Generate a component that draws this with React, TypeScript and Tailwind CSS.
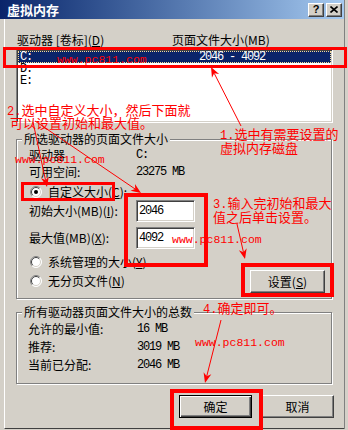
import React from "react";

const RED = "#ff0000";

function Mono({ children, className = "" }: { children: React.ReactNode; className?: string }) {
  return (
    <span className={"font-['Liberation_Mono',monospace] text-[12px] tracking-[-1.2px] " + className}>
      {children}
    </span>
  );
}

function CaptionButton({ children }: { children: React.ReactNode }) {
  return (
    <div className="flex h-[14px] w-[16px] items-center justify-center border border-t-white border-l-white border-r-[#404040] border-b-[#404040] bg-[#d4d0c8] shadow-[inset_-1px_-1px_0_#808080]">
      {children}
    </div>
  );
}

function TitleBar() {
  return (
    <div className="flex h-[19px] shrink-0 items-center bg-linear-to-r from-[#0a246a] to-[#a6caf0] pl-[7px] pr-[2px]">
      <span className="text-[13px] font-bold leading-[13px] text-white">虚拟内存</span>
      <div className="ml-auto flex gap-[2px]">
        <CaptionButton>
          <span className="font-['Liberation_Sans',sans-serif] text-[11px] font-bold leading-[11px]">?</span>
        </CaptionButton>
        <CaptionButton>
          <svg width="8" height="7" viewBox="0 0 8 7">
            <path d="M0.5 0.5 L7.5 6.5 M7.5 0.5 L0.5 6.5" stroke="#000" strokeWidth="1.6" />
          </svg>
        </CaptionButton>
      </div>
    </div>
  );
}

function RadioDot({ checked }: { checked?: boolean }) {
  return (
    <svg width="12" height="12" viewBox="0 0 12 12" className="shrink-0">
      <circle cx="6" cy="6" r="5.5" fill="#fff" />
      <path d="M2.11 9.89 A5.5 5.5 0 0 1 9.89 2.11" stroke="#808080" fill="none" />
      <path d="M9.89 2.11 A5.5 5.5 0 0 1 2.11 9.89" stroke="#fff" fill="none" />
      <path d="M2.8 9.2 A4.5 4.5 0 0 1 9.2 2.8" stroke="#404040" fill="none" />
      <path d="M9.2 2.8 A4.5 4.5 0 0 1 2.8 9.2" stroke="#d4d0c8" fill="none" />
      {checked && <circle cx="6" cy="6" r="2" fill="#000" />}
    </svg>
  );
}

function Radio({ checked, children, className = "" }: { checked?: boolean; children: React.ReactNode; className?: string }) {
  return (
    <div className={"flex h-[16px] items-center gap-[6px] pl-[13px] " + className}>
      <RadioDot checked={checked} />
      <span>{children}</span>
    </div>
  );
}

function TextBox({ value }: { value: string }) {
  return (
    <div className="flex h-[22px] w-[59px] items-center border border-t-[#808080] border-l-[#808080] border-b-white border-r-white bg-white pl-[2px] shadow-[inset_1px_1px_0_#404040,inset_-1px_-1px_0_#d4d0c8]">
      <Mono>{value}</Mono>
    </div>
  );
}

function Button({ children, isDefault, className = "" }: { children: React.ReactNode; isDefault?: boolean; className?: string }) {
  const look = isDefault
    ? "border border-black shadow-[inset_1px_1px_0_#fff,inset_-1px_-1px_0_#404040,inset_-2px_-2px_0_#808080]"
    : "border border-t-white border-l-white border-r-[#404040] border-b-[#404040] shadow-[inset_-1px_-1px_0_#808080]";
  return (
    <div className={"flex h-[23px] items-center justify-center bg-[#d4d0c8] " + look + " " + className}>
      {children}
    </div>
  );
}

function GroupLabel({ children }: { children: React.ReactNode }) {
  return <span className="-mt-[7px] ml-[5px] h-[12px] self-start bg-[#d4d0c8] px-[2px]">{children}</span>;
}

function Arrow({ x1, y1, x2, y2 }: { x1: number; y1: number; x2: number; y2: number }) {
  const dx = x2 - x1;
  const dy = y2 - y1;
  const len = Math.hypot(dx, dy);
  const ux = dx / len;
  const uy = dy / len;
  const hl = 10;
  const hw = 4;
  const bx = x2 - ux * hl;
  const by = y2 - uy * hl;
  const nx = x2 - ux * (hl - 3);
  const ny = y2 - uy * (hl - 3);
  const pts = `${x2},${y2} ${bx - uy * hw},${by + ux * hw} ${nx},${ny} ${bx + uy * hw},${by - ux * hw}`;
  return (
    <g>
      <line x1={x1} y1={y1} x2={nx} y2={ny} stroke={RED} strokeWidth="1" />
      <polygon points={pts} fill={RED} />
    </g>
  );
}

function Annotations() {
  const box = "absolute border-[#ff0000]";
  const note = "absolute whitespace-nowrap text-[13px] leading-[14px] text-[#ff0000]";
  const site = "absolute whitespace-nowrap font-['Liberation_Mono',monospace] text-[11.5px] leading-[12px] text-[#ff0000]";
  return (
    <div className="pointer-events-none absolute inset-0">
      <div className={box + " left-[3px] top-[47px] h-[21px] w-[344px] border-[3px]"} />
      <div className={box + " left-[21px] top-[182px] h-[19px] w-[94px] border-[3px]"} />
      <div className={box + " left-[124px] top-[193px] h-[74px] w-[84px] border-[4px]"} />
      <div className={box + " left-[241px] top-[263px] h-[34px] w-[93px] border-[4px]"} />
      <div className={box + " left-[170px] top-[389px] h-[41px] w-[93px] border-[4px]"} />

      <span className={site + " left-[57px] top-[54px]"}>www.pc811.com</span>
      <span className={site + " left-[15px] top-[154px]"}>www.pc811.com</span>
      <span className={site + " left-[172px] top-[234px]"}>www.pc811.com</span>
      <span className={site + " left-[195px] top-[337px]"}>www.pc811.com</span>

      <span className={note + " left-[7px] top-[103px]"}>
        <span className="font-['Liberation_Mono',monospace] text-[12px]">2.</span>选中自定义大小，然后下面就
      </span>
      <span className={note + " left-[10px] top-[116px]"}>可以设置初始和最大值。</span>
      <span className={note + " left-[220px] top-[127px]"}>
        <span className="font-['Liberation_Mono',monospace] text-[12px]">1.</span>选中有需要设置的
      </span>
      <span className={note + " left-[220px] top-[141px]"}>虚拟内存磁盘</span>
      <span className={note + " left-[213px] top-[196px]"}>
        <span className="font-['Liberation_Mono',monospace] text-[12px]">3.</span>输入完初始和最大
      </span>
      <span className={note + " left-[213px] top-[210px]"}>值之后单击设置。</span>
      <span className={note + " left-[203px] top-[301px]"}>
        <span className="font-['Liberation_Mono',monospace] text-[12px]">4.</span>确定即可。
      </span>

      <svg className="absolute inset-0" width="348" height="430" viewBox="0 0 348 430">
        <Arrow x1={241} y1={126} x2={211} y2={67} />
        <Arrow x1={33} y1={122} x2={47} y2={187} />
        <Arrow x1={35} y1={121} x2={141} y2={193} />
        <Arrow x1={237} y1={224} x2={245} y2={259} />
        <Arrow x1={221} y1={320} x2={205} y2={383} />
      </svg>
    </div>
  );
}

export default function App() {
  return (
    <div className="relative h-[430px] w-[348px] overflow-hidden bg-[#d4d0c8] font-['Noto_Sans_CJK_SC',sans-serif] text-[12px] leading-[12px] text-black">
      <div className="flex h-[429px] w-[345px] flex-col border-r border-[#808080]">
        <TitleBar />
        <div className="ml-[4px] flex flex-1 flex-col border-b border-l border-b-[#404040] border-l-white pl-[11px]">
          <div className="mt-[15px] flex h-[12px] items-center">
            <span className="ml-[1px] w-[155px]">
              驱动器 [卷标](<span className="underline">D</span>)
            </span>
            <span>页面文件大小(MB)</span>
          </div>

          <div className="mt-[3px] h-[74px] w-[317px] border border-t-[#808080] border-l-[#808080] border-b-white border-r-white bg-white p-[1px] shadow-[inset_1px_1px_0_#404040,inset_-1px_-1px_0_#d4d0c8]">
            <div className="flex h-[12px] items-center border border-dotted border-[#f5db95] bg-[#0a246a] text-white">
              <Mono className="w-[180px] pl-[1px]">C:</Mono>
              <Mono>2046 - 4092</Mono>
            </div>
            <div className="flex h-[12px] items-center pl-[2px]">
              <Mono>D:</Mono>
            </div>
            <div className="flex h-[12px] items-center pl-[2px]">
              <Mono>E:</Mono>
            </div>
          </div>

          <div className="mt-[16px] flex h-[160px] w-[316px] flex-col border border-[#808080] shadow-[inset_1px_1px_0_#fff,1px_1px_0_#fff]">
            <GroupLabel>所选驱动器的页面文件大小</GroupLabel>
            <div className="mt-[4px] flex h-[12px] items-center pl-[12px]">
              <span className="w-[107px]">驱动器</span>
              <Mono>C:</Mono>
            </div>
            <div className="mt-[5px] flex h-[12px] items-center pl-[12px]">
              <span className="w-[107px]">可用空间:</span>
              <Mono>23275 MB</Mono>
            </div>
            <Radio checked className="mt-[6px]">
              自定义大小(<span className="underline">C</span>):
            </Radio>
            <div className="flex h-[22px] items-center pl-[12px]">
              <span className="w-[107px]">
                初始大小(MB)(<span className="underline">I</span>):
              </span>
              <TextBox value="2046" />
            </div>
            <div className="mt-[5px] flex h-[22px] items-center pl-[12px]">
              <span className="w-[107px]">
                最大值(MB)(<span className="underline">X</span>):
              </span>
              <TextBox value="4092" />
            </div>
            <div className="mt-[5px] flex pr-[6px]">
              <div className="flex flex-col">
                <Radio>
                  系统管理的大小(<span className="underline">Y</span>)
                </Radio>
                <Radio className="mt-[3px]">
                  无分页文件(<span className="underline">N</span>)
                </Radio>
              </div>
              <Button className="ml-auto mt-[16px] w-[75px]">
                设置(<span className="underline">S</span>)
              </Button>
            </div>
          </div>

          <div className="mt-[13px] flex h-[72px] w-[316px] flex-col border border-[#808080] shadow-[inset_1px_1px_0_#fff,1px_1px_0_#fff]">
            <GroupLabel>所有驱动器页面文件大小的总数</GroupLabel>
            <div className="mt-[5px] flex h-[12px] items-center pl-[11px]">
              <span className="w-[109px]">允许的最小值:</span>
              <Mono>16 MB</Mono>
            </div>
            <div className="mt-[6px] flex h-[12px] items-center pl-[11px]">
              <span className="w-[109px]">推荐:</span>
              <Mono>3019 MB</Mono>
            </div>
            <div className="mt-[6px] flex h-[12px] items-center pl-[11px]">
              <span className="w-[109px]">当前已分配:</span>
              <Mono>2046 MB</Mono>
            </div>
          </div>

          <div className="mt-[11px] flex w-[318px] justify-end gap-[9px]">
            <Button isDefault className="w-[73px]">
              确定
            </Button>
            <Button className="w-[73px]">取消</Button>
          </div>
        </div>
      </div>
      <Annotations />
    </div>
  );
}
